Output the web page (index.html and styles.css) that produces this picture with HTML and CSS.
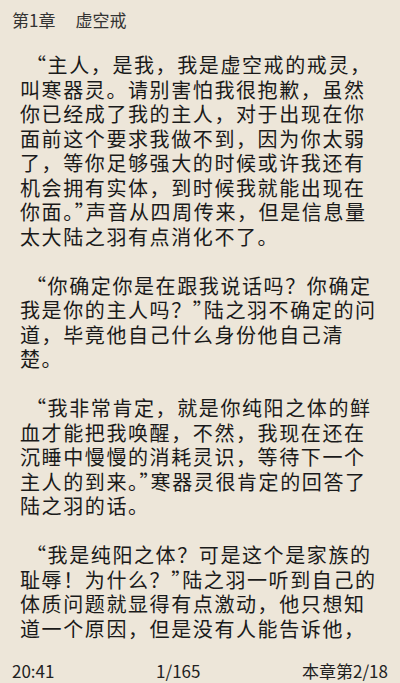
FILE: index.html
```html
<!DOCTYPE html>
<html lang="zh-CN">
<head>
<meta charset="utf-8">
<title>第1章 虚空戒</title>
<link rel="stylesheet" href="styles.css">
</head>
<body>
<div class="page">
  <div class="header"><span>第1章</span><span class="title">虚空戒</span></div>
  <div class="content">
    <p class="para">
      <span class="ln first">“主人，是我，我是虚空戒的戒灵，</span>
      <span class="ln">叫寒器灵。请别害怕我很抱歉，虽然</span>
      <span class="ln">你已经成了我的主人，对于出现在你</span>
      <span class="ln">面前这个要求我做不到，因为你太弱</span>
      <span class="ln">了，等你足够强大的时候或许我还有</span>
      <span class="ln">机会拥有实体，到时候我就能出现在</span>
      <span class="ln">你面。<span class="tr">”</span>声音从四周传来，但是信息量</span>
      <span class="ln">太大陆之羽有点消化不了。</span>
    </p>
    <p class="para">
      <span class="ln first">“你确定你是在跟我说话吗？你确定</span>
      <span class="ln">我是你的主人吗？<span class="tr">”</span>陆之羽不确定的问</span>
      <span class="ln">道，毕竟他自己什么身份他自己清</span>
      <span class="ln">楚。</span>
    </p>
    <p class="para">
      <span class="ln first">“我非常肯定，就是你纯阳之体的鲜</span>
      <span class="ln">血才能把我唤醒，不然，我现在还在</span>
      <span class="ln">沉睡中慢慢的消耗灵识，等待下一个</span>
      <span class="ln">主人的到来。<span class="tr">”</span>寒器灵很肯定的回答了</span>
      <span class="ln">陆之羽的话。</span>
    </p>
    <p class="para">
      <span class="ln first">“我是纯阳之体？可是这个是家族的</span>
      <span class="ln">耻辱！为什么？<span class="tr">”</span>陆之羽一听到自己的</span>
      <span class="ln">体质问题就显得有点激动，他只想知</span>
      <span class="ln">道一个原因，但是没有人能告诉他，</span>
    </p>
  </div>
  <div class="footer">
    <span class="time">20:41</span>
    <span class="pageno">1/165</span>
    <span class="chap">本章第2/18</span>
  </div>
</div>
</body>
</html>
```

FILE: styles.css
```css
html, body {
  margin: 0;
  padding: 0;
}
body {
  background: #ede6d9;
  font-family: "Noto Sans CJK SC", "Noto Sans", sans-serif;
  color: #1a1a1a;
}
.page {
  width: 400px;
  height: 683px;
  display: flex;
  flex-direction: column;
  overflow: hidden;
}
.header {
  padding: 10px 12px 0;
  font-size: 17px;
  line-height: 20px;
  color: #333;
  display: flex;
  gap: 20px;
}
.content {
  margin-top: 23px;
  padding-left: 20px;
}
.para {
  margin: 0 0 24.5px;
  font-size: 20px;
  letter-spacing: 1.6px;
  line-height: 24.5px;
}
.para:last-child {
  margin-bottom: 0;
}
.ln {
  display: block;
  white-space: nowrap;
}
.ln.first {
  text-indent: 6px;
}
.tr {
  letter-spacing: -9px;
}
.footer {
  margin-top: auto;
  padding: 0 12px 2px;
  font-size: 17px;
  line-height: 20px;
  color: #222;
  display: flex;
  justify-content: space-between;
}
```
